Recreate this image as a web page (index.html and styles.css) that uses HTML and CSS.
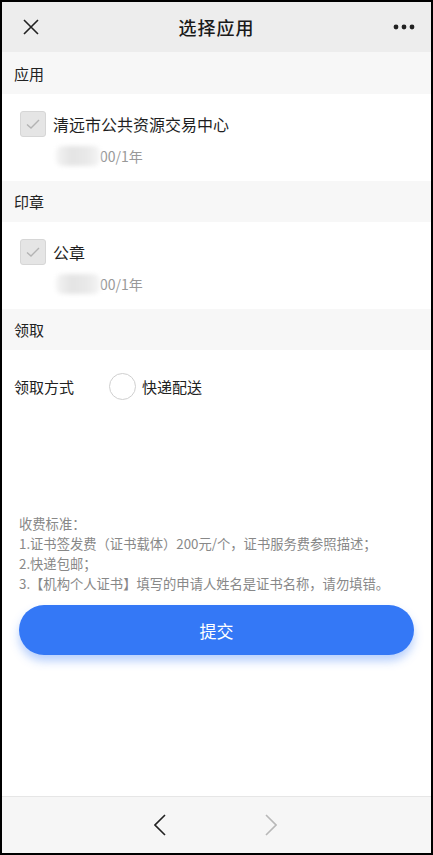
FILE: index.html
```html
<!DOCTYPE html>
<html lang="zh">
<head>
<meta charset="utf-8">
<title>选择应用</title>
<link rel="stylesheet" href="styles.css">
</head>
<body>
<div class="frame">
  <header class="topbar">
    <span class="tb-icon close">
      <svg width="16" height="16" viewBox="0 0 16 16"><path d="M1 1L15 15M15 1L1 15" stroke="#222" stroke-width="1.6" fill="none"/></svg>
    </span>
    <h1 class="title">选择应用</h1>
    <span class="tb-icon more">
      <svg width="22" height="6" viewBox="0 0 22 6"><circle cx="3" cy="3" r="2.4" fill="#222"/><circle cx="11" cy="3" r="2.4" fill="#222"/><circle cx="19" cy="3" r="2.4" fill="#222"/></svg>
    </span>
  </header>

  <main class="content">
    <div class="sec-head">应用</div>
    <div class="item">
      <div class="item-row">
        <span class="checkbox"><svg width="16" height="12" viewBox="0 0 16 12"><path d="M2 6.5L6 10L14 2" stroke="#b3b3b3" stroke-width="1.4" fill="none"/></svg></span>
        <span class="item-title">清远市公共资源交易中心</span>
      </div>
      <div class="item-sub"><span class="blur"></span>00/1年</div>
    </div>

    <div class="sec-head">印章</div>
    <div class="item">
      <div class="item-row">
        <span class="checkbox"><svg width="16" height="12" viewBox="0 0 16 12"><path d="M2 6.5L6 10L14 2" stroke="#b3b3b3" stroke-width="1.4" fill="none"/></svg></span>
        <span class="item-title">公章</span>
      </div>
      <div class="item-sub"><span class="blur"></span>00/1年</div>
    </div>

    <div class="sec-head">领取</div>
    <div class="pick-row">
      <span class="pick-label">领取方式</span>
      <span class="radio"></span>
      <span class="pick-opt">快递配送</span>
    </div>

    <div class="notes">
      <p>收费标准：</p>
      <p>1.证书签发费（证书载体）200元/个，证书服务费参照描述；</p>
      <p>2.快递包邮；</p>
      <p>3.【机构个人证书】填写的申请人姓名是证书名称，请勿填错。</p>
    </div>

    <div class="btn-wrap"><button class="submit">提交</button></div>
  </main>

  <footer class="navbar">
    <span class="nav-btn">
      <svg width="12" height="22" viewBox="0 0 12 22"><path d="M11 1L1 11L11 21" stroke="#222" stroke-width="1.6" fill="none"/></svg>
    </span>
    <span class="nav-btn">
      <svg width="12" height="22" viewBox="0 0 12 22"><path d="M1 1L11 11L1 21" stroke="#b8b8b8" stroke-width="1.6" fill="none"/></svg>
    </span>
  </footer>
</div>
</body>
</html>
```

FILE: styles.css
```css
* { box-sizing: border-box; }
html, body { margin: 0; padding: 0; }
body {
  background: #000;
  font-family: "Noto Sans CJK SC", "Noto Sans", sans-serif;
  color: #222;
}
.frame {
  width: 433px;
  height: 855px;
  border: 2px solid #000;
  background: #fff;
  display: flex;
  flex-direction: column;
  overflow: hidden;
}
.topbar {
  height: 50px;
  flex: none;
  background: #ededed;
  display: grid;
  grid-template-columns: 1fr auto 1fr;
  align-items: center;
  padding: 0 16px 0 21px;
}
.tb-icon { display: flex; align-items: center; }
.more { justify-content: flex-end; }
.close svg { display: block; }
.title {
  margin: 0;
  font-size: 18px;
  letter-spacing: 1px;
  font-weight: 500;
  color: #1a1a1a;
  line-height: 1;
  padding-right: 5px;
}
.content {
  flex: 1;
  display: flex;
  flex-direction: column;
}
.sec-head {
  height: 41px;
  background: #f7f7f7;
  font-size: 15px;
  color: #222;
  display: flex;
  align-items: center;
  padding-left: 12px;
}
.content > .sec-head:first-child { height: 42px; }
.item {
  height: 87px;
  padding: 17px 0 0 18px;
}
.item-row {
  display: flex;
  align-items: center;
  gap: 7px;
}
.checkbox {
  width: 26px;
  height: 26px;
  border: 1px solid #d6d6d6;
  background: #e5e5e5;
  border-radius: 3px;
  display: flex;
  align-items: center;
  justify-content: center;
}
.item-title {
  font-size: 16px;
  color: #1f1f1f;
  line-height: 26px;
}
.item-sub {
  margin-top: 7px;
  padding-left: 36px;
  font-size: 14px;
  color: #999;
  line-height: 24px;
  display: flex;
  align-items: center;
}
.blur {
  width: 44px;
  height: 20px;
  margin-right: 0;
  background: linear-gradient(90deg, #f4f4f4 0%, #e4e4e4 35%, #e9e9e9 70%, #f5f5f5 100%);
  filter: blur(2px);
  border-radius: 6px;
}
.pick-row {
  height: 72px;
  display: flex;
  align-items: center;
  padding-left: 12px;
  font-size: 15px;
  color: #222;
}
.pick-label { width: 95px; }
.radio {
  width: 27px;
  height: 27px;
  border-radius: 50%;
  border: 1px solid #cfcfcf;
  margin-right: 6px;
}
.pick-opt { font-size: 15px; }
.notes {
  margin-top: 92px;
  padding: 0 17px;
  font-size: 13.3px;
  line-height: 20px;
  color: #888;
}
.notes p { margin: 0; }
.btn-wrap {
  padding: 11px 17px 0 17px;
}
.submit {
  width: 395px;
  height: 50px;
  border: none;
  border-radius: 25px;
  background: #3478f6;
  color: #fff;
  font-family: inherit;
  font-size: 17px;
  box-shadow: 0 6px 10px rgba(52, 120, 246, 0.35);
  display: block;
}
.navbar {
  height: 57px;
  flex: none;
  background: #f6f6f6;
  border-top: 1px solid #e6e6e6;
  display: flex;
  align-items: center;
  justify-content: center;
  gap: 99px;
  padding-right: 2px;
}
.nav-btn svg { display: block; }
```
